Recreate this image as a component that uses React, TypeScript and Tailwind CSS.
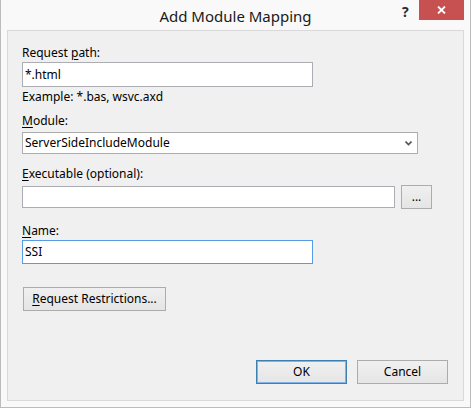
import type React from "react"

const font = { fontFamily: '"Noto Sans", "Liberation Sans", sans-serif' }

const Label: React.FC<{ keyChar: string; before?: string; after: string }> = ({ keyChar, before = "", after }) => (
  <div className="h-4 text-[12px] leading-4 text-black">
    {before}
    <span className="underline underline-offset-2">{keyChar}</span>
    {after}
  </div>
)

const DialogButton: React.FC<{ children: React.ReactNode; className?: string; primary?: boolean }> = ({
  children,
  className = "",
  primary,
}) => (
  <button
    className={`h-6 border bg-gradient-to-b from-[#f0f0f0] to-[#e5e5e5] text-[12px] leading-4 text-black ${
      primary ? "border-[#3c7fb1] outline outline-1 -outline-offset-2 outline-[#7eb4ea]" : "border-[#acacac]"
    } ${className}`}
  >
    {children}
  </button>
)

export default function App() {
  return (
    <div style={font} className="w-[471px] h-[408px] bg-[#f9f9f9] border-x border-b border-[#bcbcbc] flex flex-col">
      {/* title bar */}
      <div className="relative h-[30px] shrink-0">
        <div className="absolute left-0 right-0 top-[6px] text-center text-[15px] leading-5 text-[#1a1a1a]">
          Add Module Mapping
        </div>
        <div className="absolute left-[401px] top-[2px] text-[14px] font-bold leading-5 text-[#2b2b2b]">?</div>
        <div className="absolute left-[418px] top-0 w-[45px] h-[20px] bg-[#c75050] flex items-center justify-center">
          <svg width="9" height="8" viewBox="0 0 9 8">
            <path d="M1 0.5 L8 7.5 M8 0.5 L1 7.5" stroke="white" strokeWidth="1.8" />
          </svg>
        </div>
      </div>

      {/* client area */}
      <div className="ml-[6px] mr-[6px] h-[371px] bg-[#f0f0f0] border border-[#d9d9d9] flex flex-col pl-[14px]">
        <div className="mt-[14px]">
          <Label before="Request " keyChar="p" after="ath:" />
        </div>
        <div className="mt-px w-[291px] h-[25px] bg-white border border-[#abadb3] flex items-center px-[2px] text-[12px] text-black">
          *.html
        </div>
        <div className="mt-[2px] h-4 text-[12px] leading-4 text-black">Example: *.bas, wsvc.axd</div>

        <div className="mt-[8px]">
          <Label keyChar="M" after="odule:" />
        </div>
        <div className="mt-[3px] w-[396px] h-[22px] bg-white border border-[#acacac] flex items-center justify-between pl-[2px] pr-[5px] text-[12px] text-black">
          <span>ServerSideIncludeModule</span>
          <svg width="7" height="5" viewBox="0 0 7 5">
            <path d="M0.5 0.5 L3.5 3.5 L6.5 0.5" stroke="#555" strokeWidth="1.6" fill="none" />
          </svg>
        </div>

        <div className="mt-[12px]">
          <Label keyChar="E" after="xecutable (optional):" />
        </div>
        <div className="mt-[3px] flex items-center">
          <div className="w-[373px] h-[22px] bg-white border border-[#abadb3]" />
          <DialogButton className="ml-[6px] w-[31px]">...</DialogButton>
        </div>

        <div className="mt-[14px]">
          <Label keyChar="N" after="ame:" />
        </div>
        <div className="mt-px w-[291px] h-6 bg-white border border-[#569de5] flex items-center px-[2px] text-[12px] text-black">
          SSI
        </div>

        <DialogButton className="mt-[23px] ml-px w-[143px]">
          <span className="underline underline-offset-2">R</span>equest Restrictions...
        </DialogButton>

        <div className="mt-[49px] flex justify-end gap-[10px] pr-[15px]">
          <DialogButton primary className="w-[91px]">
            OK
          </DialogButton>
          <DialogButton className="w-[91px]">Cancel</DialogButton>
        </div>
      </div>
    </div>
  )
}
